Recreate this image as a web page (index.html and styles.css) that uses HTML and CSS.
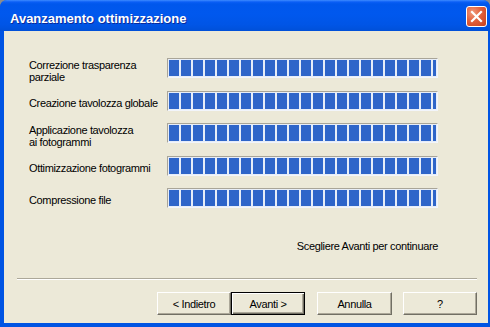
FILE: index.html
```html
<!DOCTYPE html>
<html lang="it">
<head>
<meta charset="utf-8">
<title>Avanzamento ottimizzazione</title>
<link rel="stylesheet" href="styles.css">
</head>
<body>
<div class="window">
  <div class="titlebar">
    <span class="title">Avanzamento ottimizzazione</span>
    <div class="close">
      <svg width="13" height="13" viewBox="0 0 13 13"><path d="M2 2 L11 11 M11 2 L2 11" stroke="#fff" stroke-width="2.2" stroke-linecap="square"/></svg>
    </div>
  </div>
  <div class="client">
    <div class="content">
      <div class="rows">
        <div class="row"><div class="label two">Correzione trasparenza<br>parziale</div><div class="bar"><div class="fill"></div></div></div>
        <div class="row"><div class="label">Creazione tavolozza globale</div><div class="bar"><div class="fill"></div></div></div>
        <div class="row"><div class="label two">Applicazione tavolozza<br>ai fotogrammi</div><div class="bar"><div class="fill"></div></div></div>
        <div class="row"><div class="label">Ottimizzazione fotogrammi</div><div class="bar"><div class="fill"></div></div></div>
        <div class="row"><div class="label">Compressione file</div><div class="bar"><div class="fill"></div></div></div>
      </div>
      <div class="status">Scegliere Avanti per continuare</div>
    </div>
    <div class="sep"></div>
    <div class="buttons">
      <div class="btn narrow">&lt; Indietro</div>
      <div class="btn narrow default">Avanti &gt;</div>
      <div class="btn cancel">Annulla</div>
      <div class="btn help narrow">?</div>
    </div>
  </div>
</div>
</body>
</html>
```
FILE: styles.css
```css
html, body {
  margin: 0;
  padding: 0;
  background: #8c8c8c;
}
.window {
  width: 490px;
  height: 327px;
  display: flex;
  flex-direction: column;
  background: #0054e3;
  border-radius: 7px 7px 0 0;
  overflow: hidden;
  font-family: "Liberation Sans", Arial, sans-serif;
}
.titlebar {
  height: 31px;
  flex: none;
  display: flex;
  justify-content: space-between;
  align-items: flex-start;
  background: linear-gradient(to bottom, #3d8bff 0, #0a5ef6 2px, #0057ec 4px, #0058ee 45%, #0055e6 80%, #0050d8 100%);
}
.title {
  padding: 11px 0 0 10px;
  color: #fff;
  font-weight: bold;
  font-size: 13px;
  line-height: 15px;
  text-shadow: 1px 1px 0 #0a2a9a;
}
.close {
  margin: 6px 3px 0 0;
  width: 19px;
  height: 19px;
  border: 1px solid #fff;
  border-radius: 3px;
  background: radial-gradient(circle at 30% 30%, #f09a7c 0, #e2603c 45%, #c8401c 100%);
  display: flex;
  align-items: center;
  justify-content: center;
}
.close svg { display: block; }
.client {
  flex: 1;
  margin: 0 2px 4px 4px;
  background: #ece9d8;
  display: flex;
  flex-direction: column;
  font-size: 11px;
  letter-spacing: -0.35px;
  color: #000;
}
.content {
  margin: 27px 0 0 25px;
  width: 409px;
}
.rows {
  display: flex;
  flex-direction: column;
  gap: 12.5px;
}
.row {
  display: grid;
  grid-template-columns: 138px 271px;
  grid-template-rows: 20px;
}
.label {
  line-height: 12px;
  align-self: start;
  margin-top: 6px;
  white-space: nowrap;
}
.label.two {
  margin-top: 1px;
}
.bar {
  box-sizing: border-box;
  height: 20px;
  border: 1px solid;
  border-color: #a9a598 #f2f5fb #f2f5fb #a9a598;
  padding: 1px;
  background: #e6edf8;
}
.fill {
  height: 100%;
  background: repeating-linear-gradient(to right, #2e65c9 0, #2e65c9 10px, transparent 10px, transparent 12px);
}
.status {
  margin-top: 32px;
  text-align: right;
  line-height: 13px;
}
.sep {
  margin: 25px 11px 0 13px;
  border-top: 1px solid #aca899;
  border-bottom: 1px solid #ffffff;
}
.buttons {
  margin-top: 12px;
  padding-right: 11px;
  display: flex;
  justify-content: flex-end;
}
.btn {
  box-sizing: border-box;
  width: 75px;
  height: 23px;
  display: flex;
  align-items: center;
  justify-content: center;
  background: #ece9d8;
  border: 1px solid;
  border-color: #ffffff #716f64 #716f64 #ffffff;
  box-shadow: inset -1px -1px 0 #aca899;
}
.btn.narrow { width: 74px; }
.btn.default {
  border: 1px solid #000;
  box-shadow: inset 1px 1px 0 #fff, inset -1px -1px 0 #716f64, inset -2px -2px 0 #aca899;
}
.btn.cancel { margin-left: 12px; }
.btn.help { margin-left: 11px; }
```
